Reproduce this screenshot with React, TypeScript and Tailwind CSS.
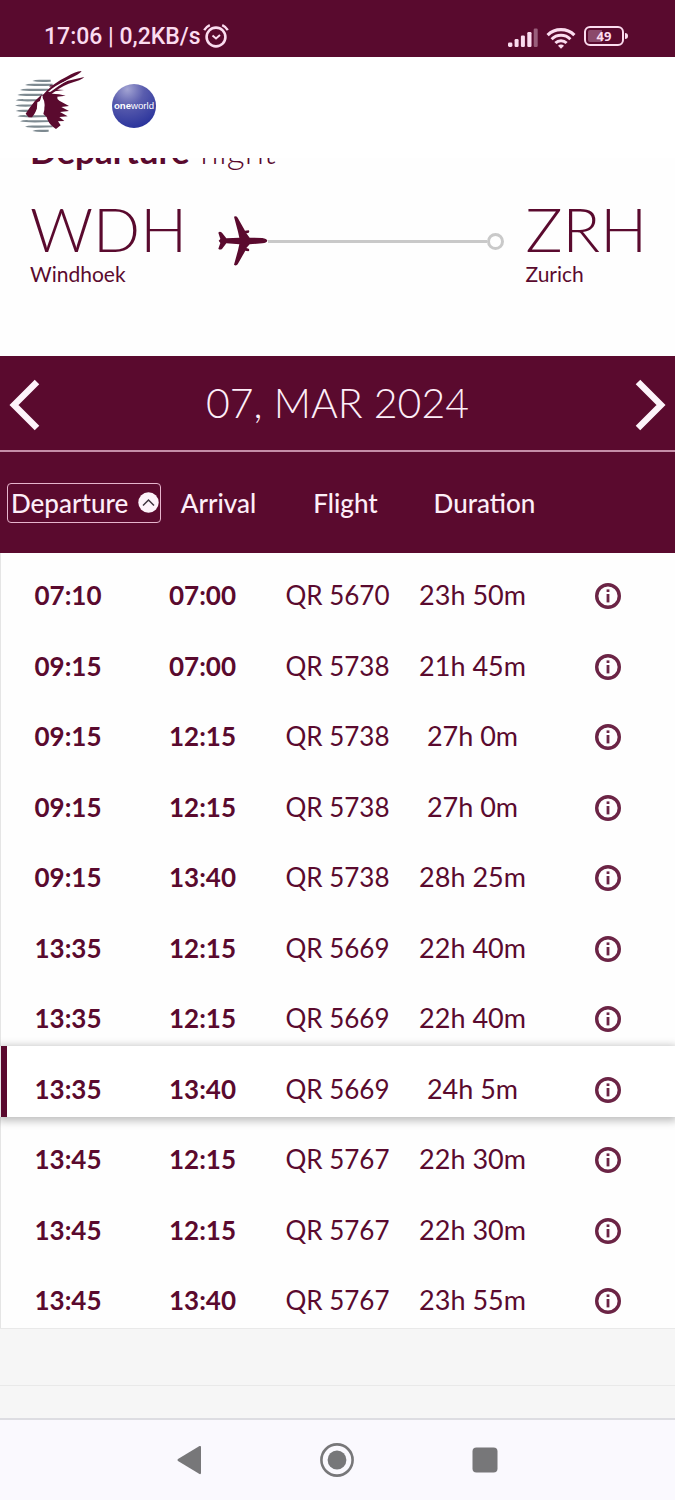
const INK = "text-[#5a0a2e]";

type Flight = { dep: string; arr: string; no: string; time: string; active?: boolean };

const flights: Flight[] = [
  { dep: "07:10", arr: "07:00", no: "QR 5670", time: "23h 50m" },
  { dep: "09:15", arr: "07:00", no: "QR 5738", time: "21h 45m" },
  { dep: "09:15", arr: "12:15", no: "QR 5738", time: "27h 0m" },
  { dep: "09:15", arr: "12:15", no: "QR 5738", time: "27h 0m" },
  { dep: "09:15", arr: "13:40", no: "QR 5738", time: "28h 25m" },
  { dep: "13:35", arr: "12:15", no: "QR 5669", time: "22h 40m" },
  { dep: "13:35", arr: "12:15", no: "QR 5669", time: "22h 40m" },
  { dep: "13:35", arr: "13:40", no: "QR 5669", time: "24h 5m", active: true },
  { dep: "13:45", arr: "12:15", no: "QR 5767", time: "22h 30m" },
  { dep: "13:45", arr: "12:15", no: "QR 5767", time: "22h 30m" },
  { dep: "13:45", arr: "13:40", no: "QR 5767", time: "23h 55m" },
];

function AlarmIcon() {
  return (
    <svg width="26" height="24" viewBox="0 0 26 24" fill="none" stroke="currentColor" aria-hidden="true">
      <circle cx="13" cy="13" r="9.4" strokeWidth="2.6" />
      <path d="M9.5 11.5 13 14.5l4-3.5" strokeWidth="2" />
      <path d="M1.2 6.2Q3.4 2.8 6.8 1.2M24.8 6.2Q22.6 2.8 19.2 1.2" strokeWidth="2.4" />
    </svg>
  );
}

function SignalIcon() {
  return (
    <svg width="30" height="20" viewBox="0 0 30 20" fill="currentColor" aria-hidden="true">
      <rect x="0" y="14.6" width="4.4" height="4.4" rx="1.4" />
      <rect x="6.6" y="11" width="4" height="8" rx="1.2" />
      <rect x="12.9" y="7.5" width="4" height="11.5" rx="1.2" />
      <rect x="19.3" y="4" width="4.2" height="15" rx="1.2" />
      <rect x="25.7" y="0.5" width="4" height="18.5" rx="1.2" opacity="0.4" />
    </svg>
  );
}

function WifiIcon() {
  return (
    <svg width="30" height="22" viewBox="0 0 30 22" fill="none" stroke="currentColor" aria-hidden="true">
      <path d="M1.6 8.2a19 19 0 0 1 26.8 0" strokeWidth="3.2" />
      <path d="M5.6 12.2a13.4 13.4 0 0 1 18.8 0" strokeWidth="3" />
      <path d="M9.4 16a8 8 0 0 1 11.2 0" strokeWidth="3" />
      <path d="M15 21.8l-3-3a4.2 4.2 0 0 1 6 0z" fill="currentColor" stroke="none" />
    </svg>
  );
}

function QatarLogo() {
  const stripes = [
    [97, 243, 152], [75, 255, 158], [60, 270, 145], [52, 285, 128], [47, 301, 116], [45, 317, 104],
    [47, 333, 92], [52, 349, 142], [60, 364, 150], [75, 380, 158], [97, 393, 146],
  ];
  return (
    <svg width="72" height="64" viewBox="42 213 216 192" role="img" aria-label="Qatar Airways">
      {stripes.map(([x, y, e]) => (
        <path key={y} d={`M${x} ${y}Q${x + 8} ${y - 4} ${x + 24} ${y - 3.6}H${e}V${y + 2}Q${x + 20} ${y + 5} ${x} ${y}z`} fill="#7d8990" />
      ))}
      <path d="M158 268l34 2-38 5zM150 256l26 1-28 3z" fill="#5a0a2e" />
      <path
        d="M128 284Q165 278 197 287L172 290Q170 297 178 302L207 318L184 321L207 333L180 336L203 349L178 351L193 363L174 364L182 376L168 387Q150 376 143 360Q140 348 130 342Q138 318 128 296z"
        fill="#5a0a2e"
      />
      <path d="M126 283Q105 300 88 325L77 341L86 352L96 352Q112 332 122 296z" fill="#5a0a2e" />
      <path d="M127 293Q122 304 112 307Q112 328 106 345Q128 342 133 318Q135 302 127 293z" fill="#fff" />
      <path d="M126 288Q156 250 200 230Q224 215 245 213Q240 222 202 239Q163 261 142 284z" fill="#5a0a2e" />
      <path d="M138 286Q170 254 204 242L253 231Q246 240 206 251Q176 263 150 286z" fill="#5a0a2e" />
      <path d="M144 276Q166 255 204 240Q178 256 152 275z" fill="#fff" />
    </svg>
  );
}

function OneworldLogo() {
  return (
    <svg width="46" height="46" viewBox="0 0 46 46" role="img" aria-label="oneworld">
      <defs>
        <radialGradient id="globe" cx="0.35" cy="0.12" r="0.95">
          <stop offset="0" stopColor="#a3a4d3" />
          <stop offset="0.4" stopColor="#5a5dae" />
          <stop offset="1" stopColor="#26309a" />
        </radialGradient>
      </defs>
      <circle cx="23" cy="23" r="22" fill="url(#globe)" />
      <text x="23" y="26" textAnchor="middle" fill="#fff" fontSize="9.6" fontFamily="Liberation Sans, sans-serif">
        <tspan fontWeight="700">one</tspan>world
      </text>
    </svg>
  );
}

function PlaneIcon() {
  return (
    <svg width="50" height="52" viewBox="655 106 150 156" fill="#5a0a2e" className="shrink-0" aria-hidden="true">
      <path d="M803 183Q801 177 788 175L750 174L740 161L746 160Q751 156 747 152L736 153L714 114Q709 107 703 111L715 156L719 174Q700 174 680 176L667 159Q660 154 656 159L662 178L657 183L662 190L656 207Q660 212 667 208L680 191Q700 193 719 194L715 212L703 255Q709 260 714 254L737 213L746 215Q751 212 747 207L740 205L750 194L788 191Q801 189 803 183z" />
    </svg>
  );
}

function InfoIcon() {
  return (
    <svg width="28" height="28" viewBox="0 0 28 28" fill="none" stroke="#6b2445" aria-hidden="true">
      <circle cx="14" cy="14" r="11.3" strokeWidth="3.4" />
      <path d="M14 12V20.4" strokeWidth="2.8" />
      <path d="M14 7.4v2.6" strokeWidth="2.8" />
    </svg>
  );
}

function Chevron({ flip }: { flip?: boolean }) {
  return (
    <svg width="32" height="52" viewBox="0 0 32 52" fill="none" stroke="#fdf3fa" strokeWidth="6.4" aria-hidden="true">
      <path d={flip ? "M3 3 26 26 3 49" : "M29 3 6 26 29 49"} />
    </svg>
  );
}

function StatusBar() {
  return (
    <div className="flex h-[57px] items-end justify-between bg-[#590a2e] pr-[47px] pb-2 pl-11 text-[#fbdcef]">
      <div className="flex items-center gap-[2px] font-['Roboto',sans-serif] text-[23px] leading-6 font-medium">
        <span className="pt-[3px]">17:06 | 0,2KB/s</span>
        <AlarmIcon />
      </div>
      <div className="flex items-center gap-2">
        <SignalIcon />
        <WifiIcon />
        <div className="flex items-center gap-px pb-[3px]">
          <div className="flex h-5 w-10 items-center justify-center rounded-md border-2 border-current bg-linear-to-r from-[#8b4a6b] from-45% to-transparent to-45% bg-clip-content p-[2px] font-['Noto_Sans',sans-serif] text-[13px] leading-4 font-bold">
            49
          </div>
          <div className="h-[6px] w-[3px] rounded-r bg-current" />
        </div>
      </div>
    </div>
  );
}

export default function App() {
  return (
    <div className={`flex min-h-screen flex-col bg-[#f6f6f6] font-['Lato',sans-serif] ${INK}`}>
      <StatusBar />

      <header className="flex h-[101px] items-start gap-[25px] bg-white px-[14px] pt-[14px]">
        <QatarLogo />
        <div className="pt-3">
          <OneworldLogo />
        </div>
      </header>

      <section className="h-[198px] overflow-hidden bg-[#fefefe] pr-7 pl-[30px]">
        <h1 className="-mt-7 text-[35px] leading-10 font-light">
          <b className="font-bold">Departure</b> flight
        </h1>
        <div className="mt-6 flex">
          <div>
            <p className="text-[62px] leading-[68px] font-light">WDH</p>
            <p className="text-[21px] leading-6">Windhoek</p>
          </div>
          <div className="mt-3 flex h-[70px] flex-1 items-center pr-[22px] pl-[31px]">
            <PlaneIcon />
            <div className="h-[3px] flex-1 bg-[#c9c9c9]" />
            <div className="size-[17px] rounded-full border-[3px] border-[#c9c9c9]" />
          </div>
          <div>
            <p className="text-[62px] leading-[68px] font-light">ZRH</p>
            <p className="text-[21px] leading-6">Zurich</p>
          </div>
        </div>
      </section>

      <nav className="flex h-24 items-center justify-between border-b-2 border-[#c58ea8] bg-[#5a0a2e] px-2 text-[#fdeef8]" aria-label="Date">
        <button type="button" aria-label="Previous day" className="pt-[3px]">
          <Chevron />
        </button>
        <h2 className="text-[41px] leading-[48px] font-light">07, MAR 2024</h2>
        <button type="button" aria-label="Next day" className="pt-[3px]">
          <Chevron flip />
        </button>
      </nav>

      <table className="w-full table-fixed border-separate border-spacing-0 bg-[#fefefe] text-center text-[26px] leading-8">
        <thead className="bg-[#5a0a2e] text-[#fdeef8]">
          <tr className="h-[101px]">
            <th className="pl-[7px] text-left font-medium whitespace-nowrap">
              <button type="button" className="flex h-10 w-[154px] items-center justify-between rounded border border-[#e6b5cd] pr-px pl-[3px]">
                Departure
                <svg width="21" height="21" viewBox="0 0 21 21" aria-hidden="true">
                  <circle cx="10.5" cy="10.5" r="10.2" fill="#fdf3fa" />
                  <path d="M5 13.5l5.5-5.5 5.5 5.5" fill="none" stroke="#403540" strokeWidth="1.5" />
                </svg>
              </button>
            </th>
            <th className="pl-8 font-medium">Arrival</th>
            <th className="pl-4 font-medium">Flight</th>
            <th className="pl-6 font-medium">Duration</th>
            <th aria-label="Details" />
          </tr>
        </thead>
        <tbody>
          {flights.map((f, i) => (
            <tr
              key={i}
              className={
                f.active
                  ? "relative z-10 h-[71px] bg-white shadow-[0_2px_8px_2px_#00000040]"
                  : "h-[70px] even:h-[71px]"
              }
            >
              <td
                className={`border-l border-[#e5e5e5] pt-[14px] font-bold ${f.active ? "shadow-[inset_6px_0_0_#5a0a2e]" : ""}`}
              >
                {f.dep}
              </td>
              <td className="pt-[14px] font-bold">{f.arr}</td>
              <td className="pt-[14px]">{f.no}</td>
              <td className="pt-[14px] text-[27px]">{f.time}</td>
              <td className="pt-4">
                <button type="button" className="block w-full" aria-label={`Details of ${f.no}`}>
                  <span className="flex justify-center">
                    <InfoIcon />
                  </span>
                </button>
              </td>
            </tr>
          ))}
        </tbody>
      </table>

      <div className="h-[58px] border-y border-[#e9e9e9]" />
      <div className="min-h-8 flex-1" />

      <nav className="flex h-[82px] items-center justify-center border-t-2 border-[#dddde2] bg-[#faf9fe] pr-[2px]" aria-label="System">
        <div className="flex w-[322px] items-center justify-between">
          <button type="button" aria-label="Back">
            <svg width="26" height="30" viewBox="0 0 26 30" fill="#777779">
              <path d="M23.5 1Q25 0.5 25 2V28Q25 29.5 23.5 29L2 16Q0.8 15 2 14z" />
            </svg>
          </button>
          <button type="button" aria-label="Home">
            <svg width="34" height="34" viewBox="0 0 34 34">
              <circle cx="17" cy="17" r="15.6" fill="none" stroke="#777779" strokeWidth="2.6" />
              <circle cx="17" cy="17" r="9.4" fill="#777779" />
            </svg>
          </button>
          <button type="button" aria-label="Recent apps">
            <svg width="26" height="26" viewBox="0 0 26 26">
              <rect x="0.5" y="0.5" width="25" height="25" rx="4" fill="#777779" />
            </svg>
          </button>
        </div>
      </nav>
    </div>
  );
}
